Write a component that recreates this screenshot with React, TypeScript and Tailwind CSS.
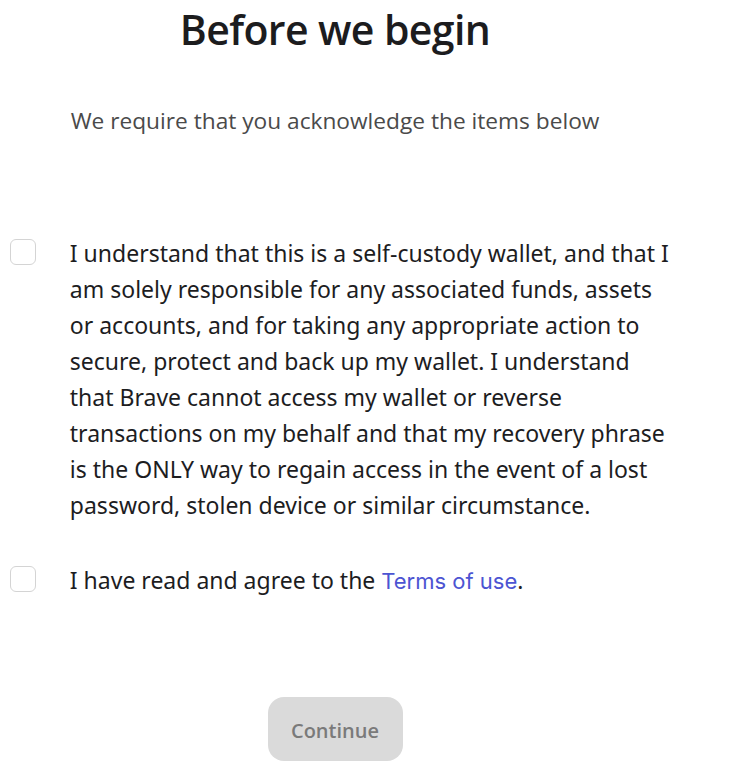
import React, { useState } from 'react';

const Checkbox = ({ checked, onChange }: { checked: boolean; onChange: () => void }) => (
  <button
    onClick={onChange}
    className="w-[26px] h-[26px] shrink-0 rounded-[6px] border border-[#d4d4d4] bg-white"
  />
);

const App: React.FC = () => {
  const [custody, setCustody] = useState(false);
  const [terms, setTerms] = useState(false);

  return (
    <div className="min-h-screen bg-white w-[670px] flex flex-col items-center font-['Noto_Sans',sans-serif] text-[#1d1d1f]">
      <h1 className="mt-[1px] text-[41px] leading-[56px] font-semibold tracking-[-0.6px] font-['Open_Sans',sans-serif] text-[#1c1c1e]">
        Before we begin
      </h1>
      <p className="mt-[48px] text-[22.7px] leading-[32px] text-[#4a4a4a] font-['Open_Sans',sans-serif]">
        We require that you acknowledge the items below
      </p>

      <div className="mt-[98px] w-full flex flex-col gap-[39px]">
        <div className="flex items-start">
          <div className="w-[70px] pl-[10px] pt-[4px]">
            <Checkbox checked={custody} onChange={() => setCustody(!custody)} />
          </div>
          <p className="w-[602px] text-[23px] leading-[36px]">
            I understand that this is a self-custody wallet, and that I am solely responsible for any associated funds, assets or accounts, and for taking any appropriate action to secure, protect and back up my wallet. I understand that Brave cannot access my wallet or reverse transactions on my behalf and that my recovery phrase is the ONLY way to regain access in the event of a lost password, stolen device or similar circumstance.
          </p>
        </div>
        <div className="flex items-start">
          <div className="w-[70px] pl-[10px] pt-[4px]">
            <Checkbox checked={terms} onChange={() => setTerms(!terms)} />
          </div>
          <p className="w-[602px] text-[23px] leading-[36px]">
            I have read and agree to the{' '}
            <a href="#" className="text-[#4c54d2] font-['Inter',sans-serif] text-[22px]">Terms of use</a>.
          </p>
        </div>
      </div>

      <button
        disabled
        className="mt-[98px] w-[135px] h-[64px] pt-[3px] rounded-[16px] bg-[#dadada] text-[#7a7a7a] text-[20px] font-semibold font-['Open_Sans',sans-serif]"
      >
        Continue
      </button>
    </div>
  );
};

export default App;
